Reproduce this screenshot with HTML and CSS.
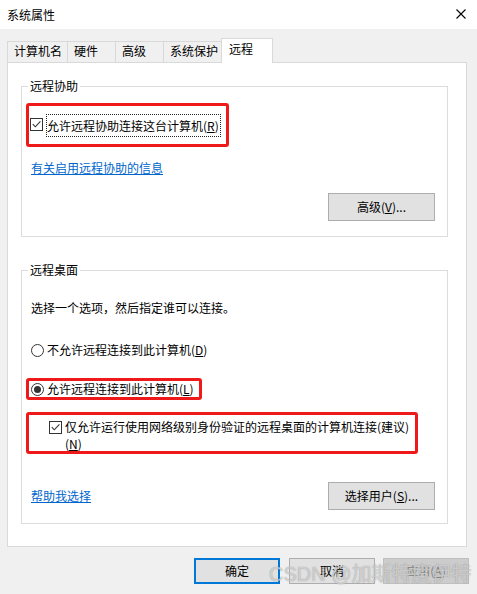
FILE: index.html
```html
<!DOCTYPE html>
<html lang="zh-CN">
<head>
<meta charset="utf-8">
<title>系统属性</title>
<link rel="stylesheet" href="styles.css">
</head>
<body>
<div class="window">
  <div class="titlebar">
    <span class="title">系统属性</span>
    <svg class="close" width="10" height="10" viewBox="0 0 10 10"><path d="M0.5 0.5 L9.5 9.5 M9.5 0.5 L0.5 9.5" stroke="#000" stroke-width="1.1" fill="none"/></svg>
  </div>
  <div class="main">
    <div class="tabs">
      <div class="tab">计算机名</div>
      <div class="tab">硬件</div>
      <div class="tab">高级</div>
      <div class="tab">系统保护</div>
      <div class="tab active">远程</div>
    </div>
    <div class="panel">
      <div class="group g1">
        <div class="legend">远程协助</div>
        <div class="mark mark1">
          <span class="cb"><svg width="11" height="11" viewBox="0 0 11 11"><path d="M1.8 5.2 L4.3 7.8 L9.4 2.4" stroke="#333" stroke-width="1.1" fill="none"/></svg></span>
          <span class="focus">允许远程协助连接这台计算机(<u>R</u>)</span>
        </div>
        <a class="link l1">有关启用远程协助的信息</a>
        <div class="btnrow"><button class="btn">高级(<u>V</u>)...</button></div>
      </div>
      <div class="group g2">
        <div class="legend">远程桌面</div>
        <p class="desc">选择一个选项，然后指定谁可以连接。</p>
        <div class="opt opt1"><span class="radio"></span><span class="lbl">不允许远程连接到此计算机(<u>D</u>)</span></div>
        <div class="mark mark2">
          <div class="opt"><span class="radio on"><span class="dot"></span></span><span class="lbl">允许远程连接到此计算机(<u>L</u>)</span></div>
        </div>
        <div class="mark mark3">
          <span class="cb"><svg width="11" height="11" viewBox="0 0 11 11"><path d="M1.8 5.2 L4.3 7.8 L9.4 2.4" stroke="#333" stroke-width="1.1" fill="none"/></svg></span>
          <span class="lbl2">仅允许运行使用网络级别身份验证的远程桌面的计算机连接(建议)<br>(<u>N</u>)</span>
        </div>
        <div class="row">
          <a class="link">帮助我选择</a>
          <button class="btn">选择用户(<u>S</u>)...</button>
        </div>
      </div>
    </div>
    <div class="footer">
      <button class="btn fbtn ok">确定</button>
      <button class="btn fbtn">取消</button>
      <button class="btn fbtn disabled">应用(<u>A</u>)</button>
    </div>
    <div class="watermark">CSDN @加斯特度伊特</div>
  </div>
</div>
</body>
</html>
```
FILE: styles.css
```css
* { box-sizing: border-box; }
html, body { margin: 0; padding: 0; }
body {
  width: 477px;
  height: 594px;
  overflow: hidden;
  background: #f0f0f0;
  font-family: "Noto Sans CJK SC", "Microsoft YaHei", sans-serif;
  font-size: 12px;
  line-height: 16px;
  color: #000;
}
.window { width: 477px; height: 594px; display: flex; flex-direction: column; }
.titlebar {
  height: 29px;
  background: #fff;
  display: flex;
  align-items: center;
  justify-content: space-between;
  padding: 0 11px 0 7px;
}
.title { font-size: 12px; line-height: 16px; }
.close { display: block; margin-top: -1px; }

.main { position: relative; flex: 1; padding: 9px 10px 0 7px; }

.tabs { display: flex; align-items: flex-end; height: 24px; }
.tab {
  height: 21px;
  min-width: 49px;
  padding: 0 5px 2px 6px;
  line-height: 18px;
  border: 1px solid #d9d9d9;
  border-bottom: none;
  background: #f0f0f0;
  margin-right: -1px;
  white-space: nowrap;
}
.tab.active {
  position: relative;
  z-index: 1;
  height: 25px;
  width: 52px;
  padding: 2px 0 0 7px;
  line-height: 16px;
  background: #fff;
  margin-left: -2px;
  margin-bottom: -1px;
}

.panel {
  background: #fff;
  border: 1px solid #d9d9d9;
  padding: 23px 18px 22px 13px;
}
.group {
  border: 1px solid #dcdcdc;
  padding: 0 12px 0 8px;
}
.g1 { padding-bottom: 15px; }
.g2 { margin-top: 33px; padding-bottom: 13px; }
.legend {
  width: fit-content;
  margin: -9px 0 0 -2px;
  padding: 0 2px;
  background: #fff;
  line-height: 16px;
}

.mark {
  border: 3px solid #f01919;
  border-radius: 3px;
  margin-left: -4px;
  display: flex;
  align-items: center;
}
.mark1 { width: 203px; height: 44px; margin-top: 9px; padding-left: 1px; }
.mark2 { width: 176px; height: 22px; margin-top: 20px; padding-left: 2px; }
.mark3 { width: 392px; height: 42px; margin-top: 12px; padding: 3px 0 0 20px; align-items: flex-start; }

.cb {
  width: 13px;
  height: 13px;
  border: 1px solid #333;
  display: flex;
  flex-shrink: 0;
}
.cb svg { display: block; }
.mark1 .cb { margin-top: -1px; }
.focus {
  margin-left: 3px;
  border: 1px dotted #222;
  padding: 3px 1px 2px 0;
  line-height: 16px;
  white-space: nowrap;
}
.mark3 .cb { margin-top: 3px; }
.lbl2 { margin-left: 3px; line-height: 17px; white-space: nowrap; }

.link {
  display: block;
  width: fit-content;
  color: #0066cc;
  text-decoration: underline;
  margin-left: 1px;
}
.l1 { margin-top: 13px; }

.btnrow { display: flex; justify-content: flex-end; margin-top: 17px; }
.btn {
  font-family: "Noto Sans CJK SC", "Microsoft YaHei", sans-serif;
  font-size: 12px;
  line-height: 16px;
  color: #000;
  width: 107px;
  height: 28px;
  padding: 0;
  background: #e1e1e1;
  border: 1px solid #adadad;
  border-radius: 0;
}

.desc { margin: 22px 0 0 1px; }
.opt { display: flex; align-items: center; }
.opt1 { margin-top: 26px; margin-left: 1px; }
.radio {
  width: 13px;
  height: 13px;
  border: 1px solid #333;
  border-radius: 50%;
  display: flex;
  align-items: center;
  justify-content: center;
  flex-shrink: 0;
}
.dot { width: 7px; height: 7px; border-radius: 50%; background: #333; }
.lbl { margin-left: 3px; white-space: nowrap; }

.row {
  display: flex;
  justify-content: space-between;
  align-items: center;
  margin-top: 28px;
}

.footer {
  display: flex;
  justify-content: flex-end;
  gap: 9px;
  margin-top: 11px;
  margin-right: -2px;
}
.fbtn { width: 86px; height: 26px; }
.fbtn + .fbtn + .fbtn { margin-left: -1px; }
.ok { border: 2px solid #0078d7; }
.disabled { background: #cccccc; border-color: #bfbfbf; color: #838383; }

.watermark {
  position: absolute;
  left: 269px;
  top: 533px;
  font-family: "Liberation Sans", "Noto Sans CJK SC", sans-serif;
  font-size: 20px;
  line-height: 24px;
  color: rgba(250, 250, 250, 0.6);
  text-shadow: 0 0 1px rgba(90, 90, 90, 0.7);
  white-space: nowrap;
  pointer-events: none;
}
```
